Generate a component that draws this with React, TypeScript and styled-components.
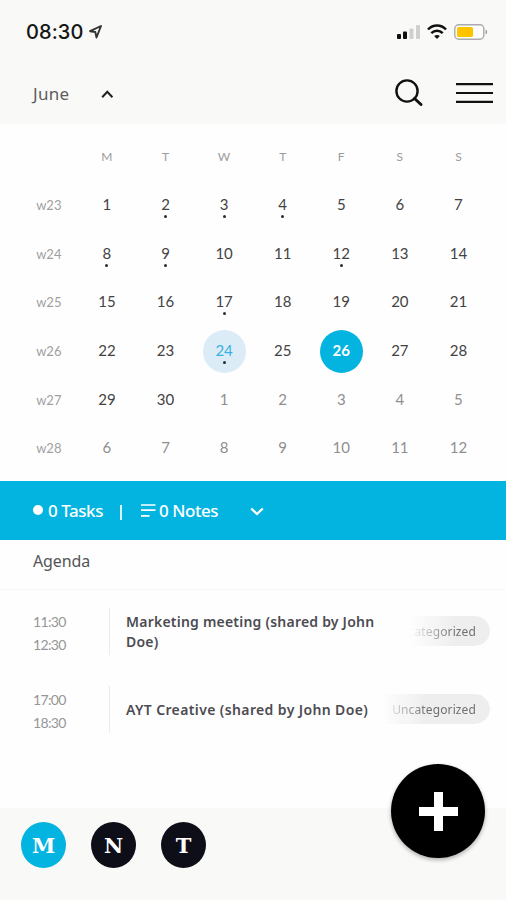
import React from "react";
import styled, { createGlobalStyle } from "styled-components";

const BLUE = "#04b4e0";
const PAPER = "#f9f9f7";

const GlobalStyle = createGlobalStyle`
  * { box-sizing: border-box; }
  body { margin: 0; background: #fff; font-family: Lato, "Noto Sans", sans-serif; }
  svg { display: block; flex: none; }
`;

const Screen = styled.div`
  position: relative;
  display: flex;
  flex-direction: column;
  width: 506px;
  height: 900px;
  overflow: hidden;
  background: #fefefe;
`;

const Header = styled.header`
  height: 124px;
  background: ${PAPER};
`;

const StatusBar = styled.div`
  display: flex;
  align-items: center;
  height: 63px;
  padding: 0 18px 0 26px;
`;

const Clock = styled.span`
  width: 61px;
  font: 500 20px/24px Inter, sans-serif;
  letter-spacing: 0.1px;
  color: #161616;
  white-space: nowrap;
`;

const StatusIcons = styled.div`
  display: flex;
  align-items: center;
  gap: 7px;
  margin-left: auto;
`;

const MonthBar = styled.div`
  display: flex;
  align-items: center;
  height: 61px;
  padding: 0 13px 2px 33px;
`;

const Month = styled.span`
  width: 68px;
  padding-top: 2px;
  font: 400 17px/24px "Noto Sans", sans-serif;
  letter-spacing: 0.3px;
  color: #5d5d5d;
`;

const Tools = styled.div`
  display: flex;
  align-items: center;
  gap: 32px;
  margin-left: auto;
`;

const Calendar = styled.section`
  display: grid;
  grid-template-columns: repeat(8, 58.6px);
  grid-template-rows: 48px repeat(6, 48.6px);
  height: 357px;
  padding: 8px 19px 0;
`;

const HeadCell = styled.span`
  display: flex;
  align-items: center;
  justify-content: center;
  font-size: 12px;
  color: #9c9c9c;
`;

const WeekCell = styled.span`
  display: flex;
  align-items: center;
  justify-content: center;
  padding: 2px 0 0 1px;
  font-size: 13px;
  color: #a0a0a0;
`;

type Look = "normal" | "outside" | "today" | "selected";

const looks: Record<Look, { color: string; background: string; weight: number }> = {
  normal: { color: "#434343", background: "transparent", weight: 400 },
  outside: { color: "#8f8f8f", background: "transparent", weight: 400 },
  today: { color: "#35b1e2", background: "#dcecf6", weight: 400 },
  selected: { color: "#fff", background: BLUE, weight: 700 },
};

const DayCell = styled.div`
  display: flex;
  align-items: center;
  justify-content: center;
  padding-top: 3px;
`;

const Day = styled.span<{ $look: Look }>`
  display: flex;
  flex-direction: column;
  align-items: center;
  width: 43px;
  height: 43px;
  padding-top: 10px;
  border-radius: 50%;
  background: ${(p) => looks[p.$look].background};
  color: ${(p) => looks[p.$look].color};
  font-size: 15px;
  font-weight: ${(p) => looks[p.$look].weight};
  line-height: 20px;
`;

const Dot = styled.i`
  width: 3px;
  height: 3px;
  margin-top: 1px;
  border-radius: 50%;
  background: #2c2c2c;
`;

const Summary = styled.section`
  display: flex;
  align-items: center;
  height: 59px;
  padding: 1px 0 0 33px;
  background: ${BLUE};
  color: #fff;
`;

const Bullet = styled.i`
  width: 10px;
  height: 10px;
  margin: 0 5px 2px 0;
  border-radius: 50%;
  background: #fff;
`;

const Count = styled.span<{ $width: number }>`
  width: ${(p) => p.$width}px;
  font: 500 17px/24px "Noto Sans", sans-serif;
  letter-spacing: -0.45px;
  white-space: nowrap;
`;

const Separator = styled.i`
  width: 2px;
  height: 15px;
  margin: 2px 19px 0 0;
  background: #d9f3fb;
`;

const AgendaTitle = styled.h2`
  height: 50px;
  margin: 0;
  padding: 9px 33px;
  border-bottom: 1px solid #f7f7f7;
  font: 400 16px/24px "Noto Sans", sans-serif;
  letter-spacing: -0.1px;
  color: #555;
`;

const Events = styled.section`
  display: flex;
  flex-direction: column;
  gap: 31px;
  padding-top: 18px;
  flex: 1;
`;

const Event = styled.article`
  display: flex;
  align-items: center;
  height: 47px;
  padding: 0 16px 0 33px;
`;

const Times = styled.div`
  width: 76px;
  padding-top: 2px;
  font-size: 14px;
  line-height: 23px;
  letter-spacing: -0.65px;
  color: #969696;
`;

const Name = styled.div<{ $spacing: number }>`
  display: flex;
  align-items: center;
  width: 268px;
  height: 47px;
  padding-left: 16px;
  border-left: 1px solid #ececec;
  font: 600 14px/20px "Noto Sans", sans-serif;
  letter-spacing: ${(p) => p.$spacing}px;
  color: #4c4c52;
  white-space: pre;
`;

const Tag = styled.span<{ $fade: number }>`
  display: flex;
  align-items: center;
  justify-content: flex-end;
  width: 110px;
  height: 30px;
  margin: -2px 0 0 auto;
  padding: 2px 14px 0 0;
  border-radius: 0 15px 15px 0;
  background: #eee;
  font: 400 12px/18px "Noto Sans", sans-serif;
  letter-spacing: 0.12px;
  color: #707070;
  mask-image: linear-gradient(to right, transparent ${(p) => p.$fade}px, #000 ${(p) => p.$fade + 44}px);
`;

const Footer = styled.footer`
  display: flex;
  gap: 25px;
  height: 92px;
  padding: 14px 21px;
  background: ${PAPER};
`;

const Letter = styled.button<{ $active?: boolean }>`
  width: 45px;
  height: 46px;
  padding: 0;
  border: 0;
  border-radius: 50%;
  background: ${(p) => (p.$active ? BLUE : "#0e0e18")};
  color: #fff;
  font: 700 21px/45px "DejaVu Serif", serif;
`;

const AddButton = styled.button`
  position: absolute;
  right: 21px;
  bottom: 42px;
  display: grid;
  place-items: center;
  width: 94px;
  height: 94px;
  padding: 0;
  border: 0;
  border-radius: 50%;
  background: #000;
  box-shadow: 0 2px 4px rgba(0, 0, 0, 0.3);
`;

const weekdays = ["M", "T", "W", "T", "F", "S", "S"];
const weeks = [
  [1, 2, 3, 4, 5, 6, 7],
  [8, 9, 10, 11, 12, 13, 14],
  [15, 16, 17, 18, 19, 20, 21],
  [22, 23, 24, 25, 26, 27, 28],
  [29, 30, 1, 2, 3, 4, 5],
  [6, 7, 8, 9, 10, 11, 12],
];
const marked = [2, 3, 4, 8, 9, 12, 17, 24];

const lookOf = (week: number, day: number): Look => {
  if (week > 3 && day < 20) return "outside";
  if (day === 24) return "today";
  if (day === 26) return "selected";
  return "normal";
};

const events = [
  { from: "11:30", to: "12:30", name: "Marketing meeting (shared by John\nDoe)", spacing: 0.22, fade: 30 },
  { from: "17:00", to: "18:30", name: "AYT Creative (shared by John Doe)", spacing: 0.38, fade: 2 },
];

export default function App() {
  return (
    <>
      <GlobalStyle />
      <Screen>
        <Header>
          <StatusBar>
            <Clock>08:30</Clock>
            <svg width="16" height="16" viewBox="0 0 16 16" fill="none" stroke="#333" strokeWidth="1.9" strokeLinejoin="round">
              <path d="M14 2 3 7.2l5.3.8 1.2 5.5L14 2Z" />
            </svg>
            <StatusIcons>
              <svg width="23" height="16" viewBox="0 0 23 16">
                <rect x="0" y="10" width="4" height="5" rx="1" fill="#111" />
                <rect x="6" y="7.5" width="4" height="7.5" rx="1" fill="#111" />
                <rect x="12.5" y="4.5" width="4" height="10.5" rx="1" fill="#cfcfcf" />
                <rect x="19" y="1" width="4" height="14" rx="1" fill="#cfcfcf" />
              </svg>
              <svg width="20" height="16" viewBox="0 0 20 16" fill="none" stroke="#111" strokeWidth="2.5">
                <path d="M1 5.5c5-5.2 13-5.2 18 0M4.3 9.2c3.3-3.2 8.1-3.2 11.4 0" />
                <path d="m10 15-2.8-3c1.6-1.4 4-1.4 5.6 0Z" fill="#111" stroke="none" />
              </svg>
              <svg width="34" height="16" viewBox="0 0 34 16">
                <rect x="0.8" y="0.8" width="29" height="14.4" rx="4" fill="#fff" stroke="#aaa" strokeWidth="1.4" />
                <rect x="3" y="3" width="16" height="10" rx="1.5" fill="#ffc400" />
                <path d="M31.6 5.5c2 .8 2 4.2 0 5Z" fill="#999" />
              </svg>
            </StatusIcons>
          </StatusBar>
          <MonthBar>
            <Month>June</Month>
            <svg width="13" height="12" viewBox="0 0 13 12" fill="none" stroke="#222" strokeWidth="2">
              <path d="m1.2 10.2 5.1-5.4 5.1 5.4" />
            </svg>
            <Tools>
              <svg width="30" height="28" viewBox="0 0 30 28" fill="none" stroke="#111" strokeWidth="2.4" strokeLinecap="round">
                <circle cx="13" cy="12" r="10.6" />
                <path d="m20.5 19.5 6.5 6" strokeWidth="3" />
              </svg>
              <svg width="37" height="24" viewBox="0 0 37 24" stroke="#111" strokeWidth="2.2">
                <path d="M0 3.2h37M0 12h37M0 20.8h37" />
              </svg>
            </Tools>
          </MonthBar>
        </Header>

        <Calendar>
          <HeadCell />
          {weekdays.map((d, i) => (
            <HeadCell key={i}>{d}</HeadCell>
          ))}
          {weeks.map((days, w) => (
            <React.Fragment key={w}>
              <WeekCell>w{23 + w}</WeekCell>
              {days.map((d) => {
                const look = lookOf(w, d);
                return (
                  <DayCell key={d}>
                    <Day $look={look}>
                      {d}
                      {look !== "outside" && marked.includes(d) && <Dot />}
                    </Day>
                  </DayCell>
                );
              })}
            </React.Fragment>
          ))}
        </Calendar>

        <Summary>
          <Bullet />
          <Count $width={72}>0 Tasks</Count>
          <Separator />
          <svg width="18" height="16" viewBox="0 0 18 16" stroke="#fff" strokeWidth="1.7">
            <path d="M0 2h14.5M0 7.2h14.5M0 12.8h8.5" />
          </svg>
          <Count $width={91}>0 Notes</Count>
          <svg width="14" height="10" viewBox="0 0 14 10" fill="none" stroke="#fff" strokeWidth="2.3">
            <path d="m1.2 2.5 5.8 5.5L12.8 2.5" />
          </svg>
        </Summary>

        <AgendaTitle>Agenda</AgendaTitle>
        <Events>
          {events.map((e) => (
            <Event key={e.from}>
              <Times>
                <div>{e.from}</div>
                <div>{e.to}</div>
              </Times>
              <Name $spacing={e.spacing}>{e.name}</Name>
              <Tag $fade={e.fade}>Uncategorized</Tag>
            </Event>
          ))}
        </Events>

        <Footer>
          <Letter $active>M</Letter>
          <Letter>N</Letter>
          <Letter>T</Letter>
        </Footer>
        <AddButton aria-label="Add">
          <svg width="39" height="39" viewBox="0 0 39 39" stroke="#fff" strokeWidth="9">
            <path d="M19.5 0v39M0 19.5h39" />
          </svg>
        </AddButton>
      </Screen>
    </>
  );
}
